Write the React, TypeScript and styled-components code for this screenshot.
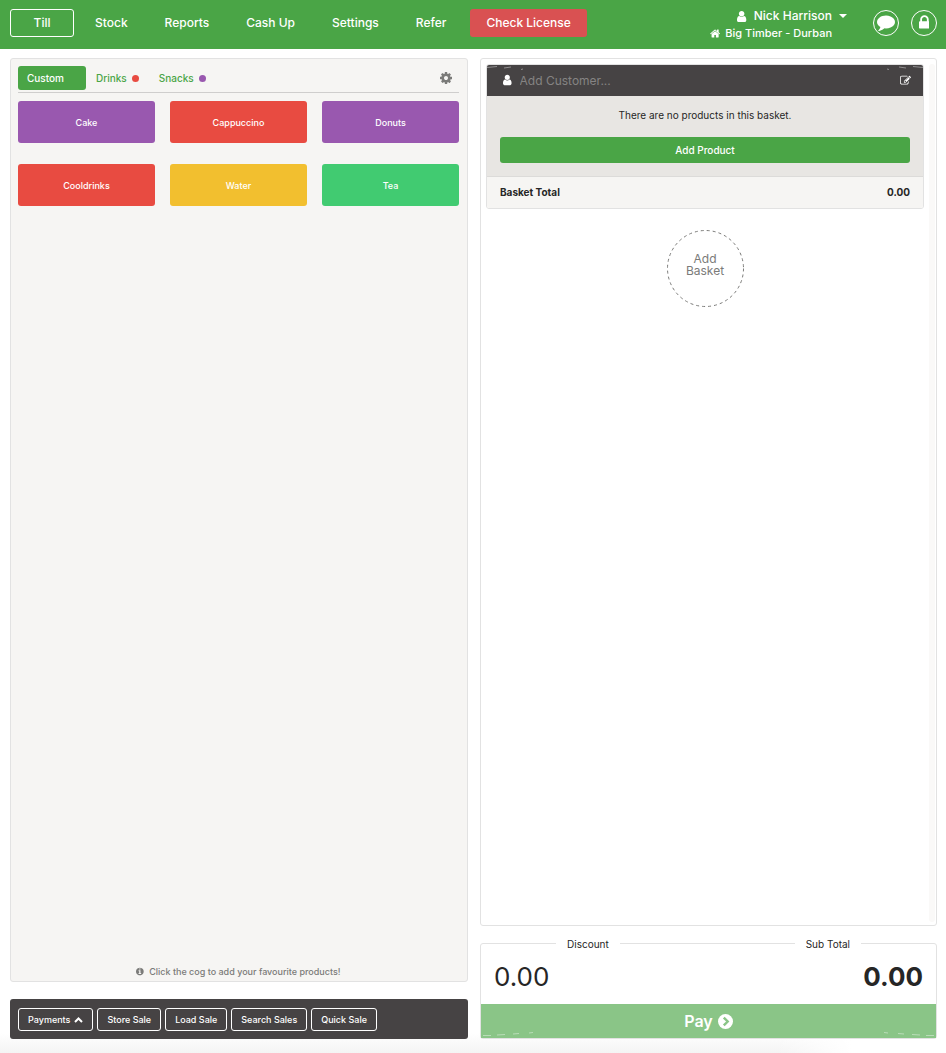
import React from "react";
import styled, { createGlobalStyle, css } from "styled-components";

const colour = {
  green: "#4aa546",
  paleGreen: "#8ac587",
  red: "#e84b41",
  purple: "#9958af",
  yellow: "#f2bf2f",
  mint: "#41cb71",
  danger: "#d95152",
  dark: "#464344",
  panel: "#f6f5f3",
  sand: "#e8e6e3",
  border: "#e2e2e2",
  text: "#262626",
  muted: "#7b7b79",
};

const GlobalStyle = createGlobalStyle`
  *, *::before, *::after { box-sizing: border-box; }
  body {
    margin: 0;
    background: #fff;
    color: ${colour.text};
    font-family: Inter, "Liberation Sans", sans-serif;
    font-size: 10px;
  }
  button, input { font: inherit; color: inherit; }
  button { cursor: pointer; padding: 0; border: 0; background: none; }
  a { color: inherit; text-decoration: none; }
`;

/* ---------- icons ---------- */

const Svg = styled.svg<{ $size: number }>`
  display: block;
  flex: none;
  height: ${(p) => p.$size}px;
  width: auto;
  fill: currentColor;
`;

const glyphs = {
  user: [1280, "M1280 1399q0 109-62.5 187t-150.5 78h-854q-88 0-150.5-78t-62.5-187q0-85 8.5-160.5t31.5-152 58.5-131 94-89 134.5-34.5q131 128 313 128t313-128q76 0 134.5 34.5t94 89 58.5 131 31.5 152 8.5 160.5zm-256-887q0 159-112.5 271.5t-271.5 112.5-271.5-112.5-112.5-271.5 112.5-271.5 271.5-112.5 271.5 112.5 112.5 271.5z"],
  home: [1664, "M1408 992v480q0 26-19 45t-45 19h-384v-384h-256v384h-384q-26 0-45-19t-19-45v-480q0-1 .5-3t.5-3l575-474 575 474q1 2 1 6zm223-69l-62 74q-8 9-21 11h-3q-13 0-21-7l-692-577-692 577q-12 8-24 7-13-2-21-11l-62-74q-8-10-7-23.5t11-21.5l719-599q32-26 76-26t76 26l244 204v-195q0-14 9-23t23-9h192q14 0 23 9t9 23v408l219 182q10 8 11 21.5t-7 23.5z"],
  lock: [1152, "M320 768h512v-192q0-106-75-181t-181-75-181 75-75 181v192zm832 96v576q0 40-28 68t-68 28h-960q-40 0-68-28t-28-68v-576q0-40 28-68t68-28h32v-192q0-184 132-316t316-132 316 132 132 316v192h32q40 0 68 28t28 68z"],
  comment: [1792, "M1792 896q0 174-120 321.5t-326 233-450 85.5q-70 0-145-8-198 175-460 242-49 14-114 22-17 2-30.5-9t-17.5-29v-1q-3-4-.5-12t2-10 4.5-9.5l6-9 7-8.5 8-9q7-8 31-34.5t34.5-38 31-39.5 32.5-51 27-59 26-76q-157-89-247.5-220t-90.5-281q0-130 71-248.5t191-204.5 286-136.500 348-50.500q244 0 450 85.500t326 233 120 321.500z"],
  cog: [1536, "M1024 896q0-106-75-181t-181-75-181 75-75 181 75 181 181 75 181-75 75-181zm512-109v222q0 12-8 23t-20 13l-185 28q-19 54-39 91 35 50 107 138 10 12 10 25t-9 23q-27 37-99 108t-94 71q-12 0-26-9l-138-108q-44 23-91 38-16 136-29 186-7 28-36 28h-222q-14 0-24.5-8.5t-11.5-21.5l-28-184q-49-16-90-37l-141 107q-10 9-25 9-14 0-25-11-126-114-165-168-7-10-7-23 0-12 8-23 15-21 51-66.5t54-70.5q-27-50-41-99l-183-27q-13-2-21-12.5t-8-23.5v-222q0-12 8-23t19-13l186-28q14-46 39-92-40-57-107-138-10-12-10-24 0-10 9-23 26-36 98.5-107.5t94.5-71.5q13 0 26 10l138 107q44-23 91-38 16-136 29-186 7-28 36-28h222q14 0 24.5 8.5t11.5 21.5l28 184q49 16 90 37l142-107q9-9 24-9 13 0 25 10 129 119 165 170 7 8 7 22 0 12-8 23-15 21-51 66.5t-54 70.5q26 50 41 98l183 28q13 2 21 12.5t8 23.5z"],
  edit: [1792, "M888 1184l116-116-152-152-116 116v56h96v96h56zm440-720q-16-16-33 1l-350 350q-17 17-1 33t33-1l350-350q17-17 1-33zm80 594v190q0 119-84.5 203.5t-203.5 84.5h-832q-119 0-203.5-84.5t-84.5-203.5v-832q0-119 84.5-203.5t203.5-84.5h832q63 0 117 25 15 7 18 23 3 17-9 29l-49 49q-14 14-32 8-23-6-45-6h-832q-66 0-113 47t-47 113v832q0 66 47 113t113 47h832q66 0 113-47t47-113v-126q0-13 9-22l64-64q15-15 35-7t20 29zm-96-738l288 288-672 672h-288v-288zm444 132l-92 92-288-288 92-92q28-28 68-28t68 28l152 152q28 28 28 68t-28 68z"],
  info: [1536, "M1024 1376v-160q0-14-9-23t-23-9h-96v-512q0-14-9-23t-23-9h-320q-14 0-23 9t-9 23v160q0 14 9 23t23 9h96v320h-96q-14 0-23 9t-9 23v160q0 14 9 23t23 9h448q14 0 23-9t9-23zm-128-896v-160q0-14-9-23t-23-9h-192q-14 0-23 9t-9 23v160q0 14 9 23t23 9h192q14 0 23-9t9-23zm640 416q0 209-103 385.5t-279.5 279.5-385.5 103-385.5-103-279.5-279.5-103-385.5 103-385.5 279.5-279.5 385.5-103 385.5 103 279.5 279.5 103 385.5z"],
} as const;

function Icon({ name, size }: { name: keyof typeof glyphs; size: number }) {
  const [width, d] = glyphs[name];
  return (
    <Svg $size={size} viewBox={`0 0 ${width} 1792`} aria-hidden="true">
      <path d={d} />
    </Svg>
  );
}

const CaretDown = () => (
  <Svg $size={4} viewBox="0 0 8 4" aria-hidden="true"><path d="M0 0h8L4 4z" /></Svg>
);

const ChevronUp = () => (
  <Svg $size={6} viewBox="0 0 9 6" aria-hidden="true">
    <path d="M1 5l3.5-3.5L8 5" fill="none" stroke="currentColor" strokeWidth="2" />
  </Svg>
);

const ArrowCircle = () => (
  <Svg $size={15} viewBox="0 0 15 15" aria-hidden="true">
    <circle cx="7.5" cy="7.5" r="7.5" />
    <path d="M5.8 3.6l3.9 3.9-3.9 3.9" fill="none" stroke={colour.paleGreen} strokeWidth="2.4" />
  </Svg>
);

/* ---------- page frame ---------- */

const Page = styled.div`
  display: flex;
  flex-direction: column;
  min-height: 100vh;
  background:
    linear-gradient(to right, transparent 82%, #fff 90%),
    linear-gradient(to top, #f4f4f4, #fff 20px);
`;

const Header = styled.header`
  display: flex;
  justify-content: space-between;
  align-items: flex-start;
  padding: 9px 9px 6px 10px;
  background: ${colour.green};
  color: #fff;
`;

const Nav = styled.nav`
  display: flex;
  gap: 5px;
  font-size: 12px;
  font-weight: 500;
`;

const NavLink = styled.a<{ $kind?: "active" | "alert" }>`
  display: flex;
  align-items: center;
  justify-content: center;
  height: 28px;
  padding: 0 15px 1px;
  border: 1px solid transparent;
  border-radius: 3px;
  white-space: nowrap;
  ${(p) => p.$kind === "active" && css`min-width: 64px; border-color: #fff;`}
  ${(p) => p.$kind === "alert" && css`margin-left: 3px; background: ${colour.danger};`}
`;

const Account = styled.div`
  display: flex;
  align-items: flex-start;
  gap: 12px;
`;

const UserMenu = styled.button`
  display: grid;
  grid-template-columns: auto 8px;
  column-gap: 7px;
  align-items: center;
  justify-items: end;
  margin-right: 14px;
  font-weight: 500;
  line-height: 14px;
`;

const UserLine = styled.span<{ $small?: boolean }>`
  display: flex;
  align-items: center;
  gap: ${(p) => (p.$small ? 5 : 7)}px;
  height: ${(p) => (p.$small ? 20 : 14)}px;
  font-size: ${(p) => (p.$small ? 11 : 12)}px;
  white-space: nowrap;
`;

const RoundButton = styled.button`
  display: grid;
  place-items: center;
  width: 26px;
  height: 26px;
  margin-top: 1px;
  padding-bottom: 2px;
  border: 1px solid #fff;
  border-radius: 50%;
`;

const Main = styled.main`
  flex: 1;
  display: grid;
  grid-template-columns: minmax(0, 458fr) minmax(0, 457fr);
  gap: 12px;
  padding: 9px 9px 14px 10px;
`;

const Column = styled.div`
  display: flex;
  flex-direction: column;
  gap: 17px;
`;

/* ---------- favourites ---------- */

const Favourites = styled.section`
  flex: 1;
  display: flex;
  flex-direction: column;
  padding: 7px 8px 5px 7px;
  border: 1px solid ${colour.border};
  border-radius: 3px;
  background: ${colour.panel};
`;

const Tabs = styled.div`
  display: flex;
  align-items: center;
  padding-bottom: 2px;
  border-bottom: 1px solid #cfcecd;
`;

const Tab = styled.button<{ $active?: boolean }>`
  display: flex;
  align-items: center;
  gap: 5px;
  height: 24px;
  padding: 0 10px;
  border-radius: 3px;
  color: ${colour.green};
  font-weight: 500;
  ${(p) => p.$active && css`
    min-width: 68px;
    padding: 0 9px;
    background: ${colour.green};
    color: #fff;
  `}
`;

const Dot = styled.span<{ $fill: string }>`
  width: 7px;
  height: 7px;
  border-radius: 50%;
  background: ${(p) => p.$fill};
`;

const CogButton = styled.button`
  margin-left: auto;
  padding-right: 7px;
  color: ${colour.muted};
`;

const ProductGrid = styled.div`
  display: grid;
  grid-template-columns: repeat(3, 1fr);
  gap: 21px 15px;
  margin-top: 8px;
`;

const Product = styled.button<{ $fill: string }>`
  height: 42px;
  border-radius: 3px;
  background: ${(p) => p.$fill};
  color: #fff;
  font-size: 9px;
  font-weight: 500;
`;

const Hint = styled.p`
  display: flex;
  align-items: center;
  justify-content: center;
  gap: 5px;
  margin: auto 0 0;
  font-size: 9px;
  line-height: 6px;
  font-weight: 500;
  color: ${colour.muted};
`;

const ActionBar = styled.div`
  display: flex;
  gap: 4px;
  padding: 9px 8px 8px;
  border-radius: 3px;
  background: ${colour.dark};
  color: #fff;
`;

const ActionButton = styled.button`
  display: flex;
  align-items: center;
  gap: 4px;
  height: 23px;
  padding: 0 9px;
  border: 1px solid #fff;
  border-radius: 3px;
  font-size: 9px;
  font-weight: 500;
  white-space: nowrap;
`;

/* ---------- baskets ---------- */

const Baskets = styled.section`
  flex: 1;
  display: flex;
  gap: 5px;
  padding: 5px 1px 3px 5px;
  border: 1px solid ${colour.border};
  border-radius: 3px;
  background: #fff;
`;

const BasketList = styled.div`
  flex: 1;
  display: flex;
  flex-direction: column;
  align-items: center;
  gap: 21px;
`;

const ScrollTrack = styled.div`
  width: 6px;
  border-radius: 3px;
  background: #faf9f8;
`;

const Basket = styled.article`
  align-self: stretch;
  overflow: hidden;
  border: 1px solid ${colour.border};
  border-radius: 3px;
`;

const CustomerBar = styled.label`
  position: relative;
  display: flex;
  align-items: center;
  gap: 8px;
  height: 31px;
  padding: 0 12px 1px 16px;
  background: ${colour.dark};
  color: #fff;
`;

const CustomerInput = styled.input`
  flex: 1;
  min-width: 0;
  padding: 0;
  border: 0;
  outline: 0;
  background: none;
  font-size: 12px;
  &::placeholder { color: #858383; opacity: 1; }
`;

const BasketBody = styled.div`
  padding: 12px 13px 13px;
  background: ${colour.sand};
  text-align: center;
`;

const Empty = styled.p`
  margin: 0 0 15px;
  line-height: 14px;
`;

const AddProduct = styled.button`
  width: 100%;
  height: 26px;
  border-radius: 3px;
  background: ${colour.green};
  color: #fff;
  font-weight: 500;
`;

const BasketTotal = styled.div`
  display: flex;
  align-items: center;
  justify-content: space-between;
  height: 32px;
  padding: 0 13px 1px;
  border-top: 1px solid #dcdbd9;
  background: ${colour.panel};
  font-weight: 700;
`;

const DashedButton = styled.button`
  position: relative;
  display: grid;
  align-content: center;
  justify-items: center;
  width: 77px;
  height: 77px;
  padding-bottom: 7px;
  color: ${colour.muted};
  font-size: 12px;
  line-height: 12px;
`;

const DashedRing = styled.svg`
  position: absolute;
  inset: 0;
  fill: none;
  stroke: currentColor;
`;

const CornerMark = styled.svg<{ $side: "left" | "right"; $bottom?: boolean }>`
  position: absolute;
  ${(p) => p.$side}: 0;
  ${(p) => (p.$bottom ? "bottom" : "top")}: 0;
  width: 64px;
  height: 6px;
  fill: none;
  stroke: #fff;
  stroke-opacity: 0.4;
  transform: scale(${(p) => (p.$side === "right" ? -1 : 1)}, ${(p) => (p.$bottom ? -1 : 1)});
`;

const Corners = ({ bottom, d }: { bottom?: boolean; d: string }) => (
  <>
    <CornerMark $side="left" $bottom={bottom} viewBox="0 0 64 6" aria-hidden="true"><path d={d} /></CornerMark>
    <CornerMark $side="right" $bottom={bottom} viewBox="0 0 64 6" aria-hidden="true"><path d={d} /></CornerMark>
  </>
);

/* ---------- totals ---------- */

const Totals = styled.section`
  position: relative;
  border: 1px solid ${colour.border};
  border-radius: 3px;
  background: #fff;
`;

const TotalLabel = styled.label<{ $side: "left" | "right" }>`
  position: absolute;
  top: -8px;
  ${(p) => p.$side}: 75px;
  padding: 0 11px;
  background: #fff;
  line-height: 16px;
`;

const Amounts = styled.div`
  display: flex;
  justify-content: space-between;
  align-items: center;
  height: 60px;
  padding: 5px 13px 0;
  font-size: 26px;
`;

const GrandTotal = styled.output`
  font-weight: 700;
`;

const PayButton = styled.button`
  position: relative;
  display: flex;
  align-items: center;
  justify-content: center;
  gap: 5px;
  width: 100%;
  height: 34px;
  background: ${colour.paleGreen};
  color: #fff;
  font-size: 16px;
  font-weight: 600;
`;

const pages = ["Stock", "Reports", "Cash Up", "Settings", "Refer"];

const products = [
  { name: "Cake", fill: colour.purple },
  { name: "Cappuccino", fill: colour.red },
  { name: "Donuts", fill: colour.purple },
  { name: "Cooldrinks", fill: colour.red },
  { name: "Water", fill: colour.yellow },
  { name: "Tea", fill: colour.mint },
];

export default function App() {
  return (
    <Page>
      <GlobalStyle />
      <Header>
        <Nav>
          <NavLink href="#till" $kind="active">Till</NavLink>
          {pages.map((page) => (
            <NavLink key={page} href={`#${page}`}>{page}</NavLink>
          ))}
          <NavLink href="#license" $kind="alert">Check License</NavLink>
        </Nav>
        <Account>
          <UserMenu>
            <UserLine><Icon name="user" size={13} />Nick Harrison</UserLine>
            <CaretDown />
            <UserLine $small><Icon name="home" size={11} />Big Timber - Durban</UserLine>
          </UserMenu>
          <RoundButton aria-label="Messages"><Icon name="comment" size={18} /></RoundButton>
          <RoundButton aria-label="Lock"><Icon name="lock" size={17} /></RoundButton>
        </Account>
      </Header>

      <Main>
        <Column>
          <Favourites>
            <Tabs>
              <Tab $active>Custom</Tab>
              <Tab>Drinks<Dot $fill={colour.red} /></Tab>
              <Tab>Snacks<Dot $fill={colour.purple} /></Tab>
              <CogButton aria-label="Edit favourites"><Icon name="cog" size={14} /></CogButton>
            </Tabs>
            <ProductGrid>
              {products.map((p) => (
                <Product key={p.name} $fill={p.fill}>{p.name}</Product>
              ))}
            </ProductGrid>
            <Hint><Icon name="info" size={9} />Click the cog to add your favourite products!</Hint>
          </Favourites>
          <ActionBar>
            <ActionButton>Payments<ChevronUp /></ActionButton>
            <ActionButton>Store Sale</ActionButton>
            <ActionButton>Load Sale</ActionButton>
            <ActionButton>Search Sales</ActionButton>
            <ActionButton>Quick Sale</ActionButton>
          </ActionBar>
        </Column>

        <Column>
          <Baskets>
            <BasketList>
              <Basket>
                <CustomerBar>
                  <Corners d="M0 2.5L10 1.500M17 3l7-1M34 4.500l2-.5" />
                  <Icon name="user" size={12} />
                  <CustomerInput placeholder="Add Customer..." aria-label="Customer" />
                  <Icon name="edit" size={11} />
                </CustomerBar>
                <BasketBody>
                  <Empty>There are no products in this basket.</Empty>
                  <AddProduct>Add Product</AddProduct>
                </BasketBody>
                <BasketTotal><span>Basket Total</span><span>0.00</span></BasketTotal>
              </Basket>
              <DashedButton>
                <DashedRing viewBox="0 0 77 77" aria-hidden="true">
                  <circle cx="38.5" cy="38.5" r="38" strokeDasharray="3 3" />
                </DashedRing>
                <span>Add</span>
                <span>Basket</span>
              </DashedButton>
            </BasketList>
            <ScrollTrack />
          </Baskets>
          <Totals>
            <TotalLabel $side="left" htmlFor="discount">Discount</TotalLabel>
            <TotalLabel $side="right" htmlFor="subtotal">Sub Total</TotalLabel>
            <Amounts>
              <output id="discount">0.00</output>
              <GrandTotal id="subtotal">0.00</GrandTotal>
            </Amounts>
            <PayButton>
              <Corners bottom d="M2 2.500h8M16 3l8 .5M32 4l6 .5M48 5l4 .5" />
              Pay<ArrowCircle />
            </PayButton>
          </Totals>
        </Column>
      </Main>
    </Page>
  );
}
